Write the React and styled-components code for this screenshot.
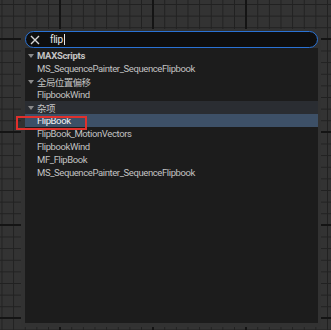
import React from "react";
import styled, { createGlobalStyle } from "styled-components";

const GlobalStyle = createGlobalStyle`
  html, body {
    margin: 0;
    padding: 0;
    background: #2a2a2a;
  }
  body {
    font-family: Roboto, "Noto Sans CJK SC", sans-serif;
  }
`;

const groups = [
  { title: "MAXScripts", bold: true, items: ["MS_SequencePainter_SequenceFlipbook"] },
  { title: "全局位置偏移", items: ["FlipbookWind"] },
  {
    title: "杂项",
    active: true,
    items: [
      "FlipBook",
      "FlipBook_MotionVectors",
      "FlipbookWind",
      "MF_FlipBook",
      "MS_SequencePainter_SequenceFlipbook",
    ],
  },
];

const App = () => {
  return (
    <>
      <GlobalStyle />
      <Canvas>
        <Panel>
          <SearchBar>
            <svg width="10" height="10" viewBox="0 0 10 10">
              <path d="M1 1 L9 9 M9 1 L1 9" stroke="#d6d6d6" strokeWidth="1.4" />
            </svg>
            <SearchText>flip</SearchText>
            <Caret />
          </SearchBar>
          <List>
            {groups.map((g) => (
              <React.Fragment key={g.title}>
                <Header $active={g.active} $bold={g.bold}>
                  <Arrow />
                  {g.title}
                </Header>
                {g.items.map((item, i) => (
                  <Item key={item + i} $selected={g.active && i === 0}>
                    {item}
                    {g.active && i === 0 && <Marker />}
                  </Item>
                ))}
              </React.Fragment>
            ))}
          </List>
        </Panel>
      </Canvas>
    </>
  );
};

export default App;

const Canvas = styled.div`
  width: 331px;
  height: 330px;
  box-sizing: border-box;
  padding: 29px 10px 0 21px;
  overflow: hidden;
  background-color: #333333;
  background-image: linear-gradient(to right, #141414 2px, transparent 2px),
    linear-gradient(to bottom, #141414 2px, transparent 2px),
    linear-gradient(to right, #212121 1px, transparent 1px),
    linear-gradient(to bottom, #212121 1px, transparent 1px);
  background-size: 93px 93px, 93px 93px, 11.625px 11.625px, 11.625px 11.625px;
  background-position: 59px 38px, 59px 38px, 1.5px 4px, 1.5px 4px;
`;

const Panel = styled.div`
  width: 300px;
  height: 298px;
  box-sizing: border-box;
  background: #323232;
  padding: 2px 3px 4px 4px;
  display: flex;
  flex-direction: column;
`;

const SearchBar = styled.div`
  height: 17px;
  box-sizing: border-box;
  border: 1.5px solid #2a72d4;
  border-radius: 9px;
  background: #0e0e0e;
  display: flex;
  align-items: center;
  padding-left: 4px;
  svg {
    flex-shrink: 0;
  }
`;

const SearchText = styled.span`
  margin-left: 10px;
  color: #e8e8e8;
  font-size: 10px;
  letter-spacing: -0.3px;
`;

const Caret = styled.span`
  width: 1px;
  height: 11px;
  background: #e8e8e8;
  margin-left: 1px;
`;

const List = styled.div`
  flex: 1;
  background: #1c1c1c;
  padding-top: 1px;
  display: flex;
  flex-direction: column;
`;

const Header = styled.div`
  height: 13px;
  display: flex;
  align-items: center;
  padding-left: 3px;
  font-size: 9.5px;
  letter-spacing: ${(p) => (p.$bold ? "-0.3px" : "-0.6px")};
  white-space: nowrap;
  color: #c4c4c4;
  font-weight: ${(p) => (p.$bold ? 700 : 400)};
  background: ${(p) => (p.$active ? "#2a2d32" : "transparent")};
`;

const Arrow = styled.span`
  width: 0;
  height: 0;
  border-left: 3px solid transparent;
  border-right: 3px solid transparent;
  border-top: 4px solid #8a8a8a;
  margin-right: 3px;
`;

const Item = styled.div`
  position: relative;
  height: 13px;
  display: flex;
  align-items: center;
  padding-left: 12px;
  font-size: 9.5px;
  letter-spacing: -0.4px;
  white-space: nowrap;
  color: ${(p) => (p.$selected ? "#f2f2f2" : "#c2c2c2")};
  background: ${(p) => (p.$selected ? "#3d5067" : "transparent")};
`;

const Marker = styled.span`
  position: absolute;
  left: -9px;
  top: 2px;
  width: 71px;
  height: 14px;
  border: 2px solid #e0302c;
  box-sizing: border-box;
`;
